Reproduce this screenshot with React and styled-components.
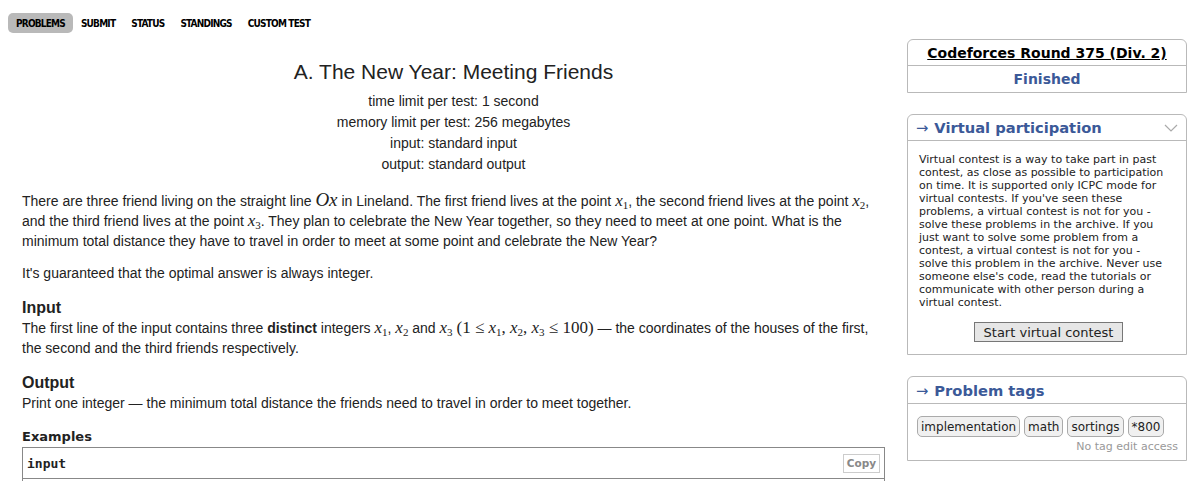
import React from "react";
import styled, { createGlobalStyle } from "styled-components";

const GlobalStyle = createGlobalStyle`
  body {
    margin: 0;
    background: #fff;
    color: #222;
    font-family: "Liberation Sans", Arial, sans-serif;
  }
`;

const Page = styled.div`
  width: 1196px;
  height: 481px;
  overflow: hidden;
`;

const Menu = styled.ul`
  display: flex;
  list-style: none;
  margin: 0;
  padding: 13px 0 0 8px;
  height: 20px;
`;

const MenuItem = styled.li`
  display: flex;
  align-items: center;
  height: 20px;
  padding: 1px 8px 0;
  box-sizing: border-box;
  border-radius: 5px;
  background: ${(p) => (p.$active ? "#b9b9b9" : "transparent")};
  font-family: "DejaVu Sans", "Liberation Sans", sans-serif;
  font-stretch: condensed;
  font-weight: bold;
  font-size: 10px;
  letter-spacing: -0.8px;
  color: #000;
`;

const Body = styled.div`
  display: flex;
  align-items: flex-start;
  margin-top: 6px;
`;

const Main = styled.div`
  width: 863px;
  margin-left: 22px;
  padding-top: 20px;
  font-size: 14px;
`;

const Header = styled.div`
  text-align: center;
`;

const Title = styled.div`
  font-size: 21px;
  line-height: 26px;
  margin-bottom: 6px;
`;

const Limit = styled.div`
  line-height: 21px;
`;

const Para = styled.p`
  margin: ${(p) => p.$top || 12}px 0 0;
  line-height: 20px;
`;

const SectionTitle = styled.div`
  margin-top: 15px;
  font-weight: bold;
  font-size: 16px;
  line-height: 20px;
`;

const SectionText = styled.div`
  line-height: 20px;
`;

const M = styled.span`
  font-family: "Liberation Serif", "Times New Roman", serif;
  font-style: italic;
  font-size: ${(p) => (p.$big ? 19 : 17)}px;
  line-height: 1;
  sub {
    font-style: normal;
    font-size: 11px;
    vertical-align: -3px;
    line-height: 0;
  }
`;

const MR = styled.span`
  font-family: "Liberation Serif", "Times New Roman", serif;
  font-size: 17px;
  line-height: 1;
`;

const ExamplesTitle = styled.div`
  margin-top: 15px;
  font-family: "DejaVu Sans", Verdana, sans-serif;
  font-weight: bold;
  font-size: 13px;
  line-height: 18px;
`;

const SampleBox = styled.div`
  margin-top: 1px;
  border: 1px solid #888;
  border-bottom: none;
  height: 40px;
`;

const SampleHead = styled.div`
  display: flex;
  justify-content: space-between;
  align-items: center;
  height: 30px;
  padding: 0 4px;
  border-bottom: 1px solid #888;
  font-family: "DejaVu Sans Mono", "Liberation Mono", monospace;
  font-weight: bold;
  font-size: 13px;
`;

const CopyButton = styled.span`
  display: flex;
  align-items: center;
  height: 17px;
  padding: 0 3px;
  border: 1px solid #ccc;
  font-family: "DejaVu Sans", Verdana, sans-serif;
  font-weight: bold;
  font-size: 10.5px;
  color: #888;
`;

const Sidebar = styled.div`
  width: 280px;
  margin-left: 22px;
  display: flex;
  flex-direction: column;
  gap: 21px;
  font-family: "DejaVu Sans", Verdana, sans-serif;
`;

const Box = styled.div`
  border: 1px solid #b9b9b9;
  border-radius: 6px 6px 0 0;
`;

const BoxRow = styled.div`
  display: flex;
  align-items: center;
  justify-content: ${(p) => (p.$center ? "center" : "space-between")};
  height: ${(p) => p.$h || 25}px;
  padding: 0 8px;
  border-bottom: ${(p) => (p.$last ? "none" : "1px solid #b9b9b9")};
  font-weight: bold;
  font-size: ${(p) => (p.$big ? 14.7 : 14)}px;
  color: ${(p) => (p.$dark ? "#000" : "#3b5998")};
`;

const RoundLink = styled.span`
  text-decoration: underline;
`;

const Arrow = styled.span`
  font-weight: normal;
  margin-right: 6px;
`;

const BoxBody = styled.div`
  padding: 12px 18px 12px 11px;
`;

const Blurb = styled.div`
  font-size: 11px;
  line-height: 13px;
  color: #222;
`;

const ButtonRow = styled.div`
  display: flex;
  justify-content: center;
  margin: 13px -10px 0 0;
`;

const Button = styled.button`
  height: 20px;
  padding: 0 9px;
  background: #e6e6e6;
  border: 1px solid #777;
  font-family: "DejaVu Sans", Verdana, sans-serif;
  font-size: 13px;
  color: #222;
`;

const Tags = styled.div`
  display: flex;
  flex-wrap: wrap;
  gap: 4px;
  padding: 12px 8px 0 9px;
`;

const Tag = styled.span`
  display: flex;
  align-items: center;
  height: 19px;
  padding: 0 3px;
  border: 1px solid #aaa;
  border-radius: 5px;
  background: #f0f0f0;
  font-size: 12px;
  color: #222;
`;

const TagNote = styled.div`
  text-align: right;
  padding: 3px 8px 6px 0;
  font-size: 11px;
  line-height: 14px;
  color: #999;
`;

const Chevron = () => (
  <svg width="14" height="8" viewBox="0 0 14 8">
    <path d="M1 1 L7 7 L13 1" fill="none" stroke="#aaa" strokeWidth="1.2" />
  </svg>
);

export default function App() {
  const tags = ["implementation", "math", "sortings", "*800"];
  return (
    <Page>
      <GlobalStyle />
      <Menu>
        <MenuItem $active>PROBLEMS</MenuItem>
        <MenuItem>SUBMIT</MenuItem>
        <MenuItem>STATUS</MenuItem>
        <MenuItem>STANDINGS</MenuItem>
        <MenuItem>CUSTOM TEST</MenuItem>
      </Menu>
      <Body>
        <Main>
          <Header>
            <Title>A. The New Year: Meeting Friends</Title>
            <Limit>time limit per test: 1 second</Limit>
            <Limit>memory limit per test: 256 megabytes</Limit>
            <Limit>input: standard input</Limit>
            <Limit>output: standard output</Limit>
          </Header>
          <Para $top={15}>
            There are three friend living on the straight line <M $big>Ox</M> in Lineland. The first
            friend lives at the point <M>x<sub>1</sub></M>, the second friend lives at the point{" "}
            <M>x<sub>2</sub></M>, and the third friend lives at the point <M>x<sub>3</sub></M>. They
            plan to celebrate the New Year together, so they need to meet at one point. What is the
            minimum total distance they have to travel in order to meet at some point and celebrate
            the New Year?
          </Para>
          <Para>It's guaranteed that the optimal answer is always integer.</Para>
          <SectionTitle>Input</SectionTitle>
          <SectionText>
            The first line of the input contains three <b>distinct</b> integers{" "}
            <M>x<sub>1</sub></M>, <M>x<sub>2</sub></M> and <M>x<sub>3</sub></M>{" "}
            <MR>(1 ≤ </MR><M>x<sub>1</sub></M><MR>, </MR><M>x<sub>2</sub></M><MR>, </MR>
            <M>x<sub>3</sub></M><MR> ≤ 100)</MR> — the coordinates of the houses of the first,
            the second and the third friends respectively.
          </SectionText>
          <SectionTitle>Output</SectionTitle>
          <SectionText>
            Print one integer — the minimum total distance the friends need to travel in order to
            meet together.
          </SectionText>
          <ExamplesTitle>Examples</ExamplesTitle>
          <SampleBox>
            <SampleHead>
              <span>input</span>
              <CopyButton>Copy</CopyButton>
            </SampleHead>
          </SampleBox>
        </Main>
        <Sidebar>
          <Box>
            <BoxRow $center $dark>
              <RoundLink>Codeforces Round 375 (Div. 2)</RoundLink>
            </BoxRow>
            <BoxRow $center $last $h={26}>
              Finished
            </BoxRow>
          </Box>
          <Box>
            <BoxRow $big $h={25}>
              <span>
                <Arrow>→</Arrow>Virtual participation
              </span>
              <Chevron />
            </BoxRow>
            <BoxBody>
              <Blurb>
                Virtual contest is a way to take part in past contest, as close as possible to
                participation on time. It is supported only ICPC mode for virtual contests. If
                you've seen these problems, a virtual contest is not for you - solve these problems
                in the archive. If you just want to solve some problem from a contest, a virtual
                contest is not for you - solve this problem in the archive. Never use someone
                else's code, read the tutorials or communicate with other person during a virtual
                contest.
              </Blurb>
              <ButtonRow>
                <Button>Start virtual contest</Button>
              </ButtonRow>
            </BoxBody>
          </Box>
          <Box>
            <BoxRow $big $h={26}>
              <span>
                <Arrow>→</Arrow>Problem tags
              </span>
            </BoxRow>
            <Tags>
              {tags.map((t) => (
                <Tag key={t}>{t}</Tag>
              ))}
            </Tags>
            <TagNote>No tag edit access</TagNote>
          </Box>
        </Sidebar>
      </Body>
    </Page>
  );
}
